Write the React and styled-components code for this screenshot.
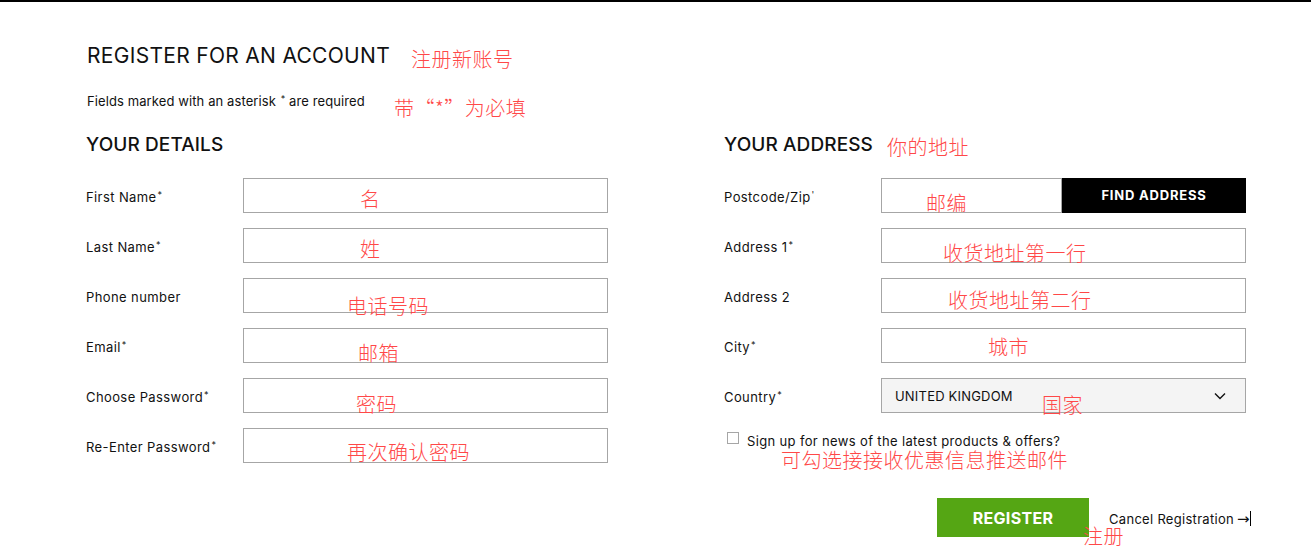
import React from "react";
import styled, { createGlobalStyle } from "styled-components";

const Global = createGlobalStyle`
  html, body { margin: 0; padding: 0; background: #fff; }
  body { font-family: "Inter", "Liberation Sans", sans-serif; color: #111; }
`;

const Page = styled.div`
  position: relative;
  width: 1311px;
  height: 553px;
  box-sizing: border-box;
  border-top: 2px solid #000;
  padding: 41px 0 0 87px;
  overflow: hidden;
`;

const Title = styled.h1`
  margin: 0;
  font-size: 21px;
  line-height: 26px;
  font-weight: 400;
  letter-spacing: 0.3px;
`;

const Intro = styled.p`
  margin: 24px 0 0;
  font-size: 13px;
  line-height: 16px;
  letter-spacing: 0.1px;
`;

const Star = styled.sup`
  font-size: 9px;
  line-height: 0;
  vertical-align: 4px;
  margin-left: 1px;
`;

const Columns = styled.div`
  display: grid;
  grid-template-columns: 522px 522px;
  column-gap: 116px;
  margin-top: 24px;
  margin-left: -1px;
`;

const Column = styled.section`
  display: flex;
  flex-direction: column;
`;

const Heading = styled.h2`
  margin: 0 0 21px;
  font-size: 19px;
  line-height: 24px;
  font-weight: 500;
  letter-spacing: 0.1px;
`;

const Rows = styled.div`
  display: flex;
  flex-direction: column;
  gap: 15px;
`;

const Row = styled.div`
  display: flex;
  align-items: center;
  height: 35px;
`;

const Label = styled.label`
  width: 157px;
  flex: none;
  font-size: 13px;
  line-height: 16px;
  letter-spacing: 0.4px;
  padding-top: 3px;
`;

const Input = styled.input`
  box-sizing: border-box;
  width: ${(p) => p.$width || 365}px;
  height: 35px;
  border: 1px solid #a6a6a6;
  margin: 0;
  padding: 0 12px;
  background: #fff;
  font: inherit;
`;

const BlackButton = styled.button`
  box-sizing: border-box;
  width: 184px;
  height: 35px;
  border: none;
  background: #000;
  color: #fff;
  font-family: inherit;
  font-size: 13px;
  font-weight: 700;
  letter-spacing: 0.8px;
  padding: 0 0 2px;
`;

const Select = styled.div`
  box-sizing: border-box;
  width: 365px;
  height: 35px;
  border: 1px solid #a6a6a6;
  background: #f4f4f4;
  display: flex;
  align-items: center;
  justify-content: space-between;
  padding: 0 19px 0 13px;
  font-size: 13px;
  letter-spacing: 0.2px;
`;

const CheckRow = styled.label`
  display: flex;
  align-items: center;
  gap: 8px;
  margin: 19px 0 0 3px;
  font-size: 13px;
  line-height: 18px;
  letter-spacing: 0.35px;
`;

const Box = styled.span`
  flex: none;
  width: 10px;
  height: 10px;
  border: 1px solid #a6a6a6;
  margin-top: -6px;
`;

const Actions = styled.div`
  display: flex;
  align-items: center;
  gap: 20px;
  margin: 48px 0 0 213px;
  white-space: nowrap;
`;

const GreenButton = styled.button`
  flex: none;
  width: 152px;
  height: 39px;
  border: none;
  background: #55a614;
  color: #fff;
  font-family: inherit;
  font-size: 16px;
  font-weight: 700;
  letter-spacing: 0.3px;
`;

const Cancel = styled.a`
  display: flex;
  align-items: center;
  flex: none;
  font-size: 13px;
  letter-spacing: 0.3px;
  color: #111;
  text-decoration: none;
  padding-top: 2px;
`;

const Arrow = styled.span`
  font-family: "DejaVu Sans", sans-serif;
  font-size: 15px;
  line-height: 16px;
  margin-left: 3px;
  letter-spacing: 0;
`;

const Bar = styled.span`
  display: inline-block;
  width: 1px;
  height: 15px;
  background: #000;
`;

const Note = styled.span`
  position: absolute;
  left: ${(p) => p.$x}px;
  top: ${(p) => p.$y}px;
  color: #ff4848;
  font-family: "Noto Sans CJK SC", sans-serif;
  font-weight: 300;
  font-size: 20px;
  line-height: 1;
  letter-spacing: 0.5px;
  white-space: nowrap;
  pointer-events: none;
`;

const details = [
  ["First Name", true],
  ["Last Name", true],
  ["Phone number", false],
  ["Email", true],
  ["Choose Password", true],
  ["Re-Enter Password", true],
];

const notes = [
  ["注册新账号", 411, 47],
  ["带“*”为必填", 394, 96],
  ["你的地址", 887, 135],
  ["名", 360, 187],
  ["姓", 360, 237],
  ["电话号码", 347, 294],
  ["邮箱", 358, 341],
  ["密码", 356, 392],
  ["再次确认密码", 347, 440],
  ["邮编", 926, 191],
  ["收货地址第一行", 943, 241],
  ["收货地址第二行", 948, 288],
  ["城市", 988, 335],
  ["国家", 1042, 393],
  ["可勾选接接收优惠信息推送邮件", 781, 448],
  ["注册", 1083, 524],
];

export default function App() {
  return (
    <Page>
      <Global />
      <Title>REGISTER FOR AN ACCOUNT</Title>
      <Intro>
        Fields marked with an asterisk <Star>*</Star> are required
      </Intro>
      <Columns>
        <Column>
          <Heading>YOUR DETAILS</Heading>
          <Rows>
            {details.map(([l, req]) => (
              <Row key={l}>
                <Label>
                  {l}
                  {req && <Star>*</Star>}
                </Label>
                <Input type="text" />
              </Row>
            ))}
          </Rows>
        </Column>
        <Column>
          <Heading>YOUR ADDRESS</Heading>
          <Rows>
            <Row>
              <Label>
                Postcode/Zip<Star>'</Star>
              </Label>
              <Input $width={181} type="text" />
              <BlackButton>FIND ADDRESS</BlackButton>
            </Row>
            <Row>
              <Label>
                Address 1<Star>*</Star>
              </Label>
              <Input type="text" />
            </Row>
            <Row>
              <Label>Address 2</Label>
              <Input type="text" />
            </Row>
            <Row>
              <Label>
                City<Star>*</Star>
              </Label>
              <Input type="text" />
            </Row>
            <Row>
              <Label>
                Country<Star>*</Star>
              </Label>
              <Select>
                <span>UNITED KINGDOM</span>
                <svg width="12" height="8" viewBox="0 0 12 8">
                  <polyline points="1,1.5 6,6.5 11,1.5" fill="none" stroke="#111" strokeWidth="1.4" />
                </svg>
              </Select>
            </Row>
          </Rows>
          <CheckRow>
            <Box />
            Sign up for news of the latest products &amp; offers?
          </CheckRow>
          <Actions>
            <GreenButton>REGISTER</GreenButton>
            <Cancel href="#">
              Cancel Registration
              <Arrow>→</Arrow>
              <Bar />
            </Cancel>
          </Actions>
        </Column>
      </Columns>
      {notes.map(([t, x, y]) => (
        <Note key={t} $x={x} $y={y}>
          {t}
        </Note>
      ))}
    </Page>
  );
}
